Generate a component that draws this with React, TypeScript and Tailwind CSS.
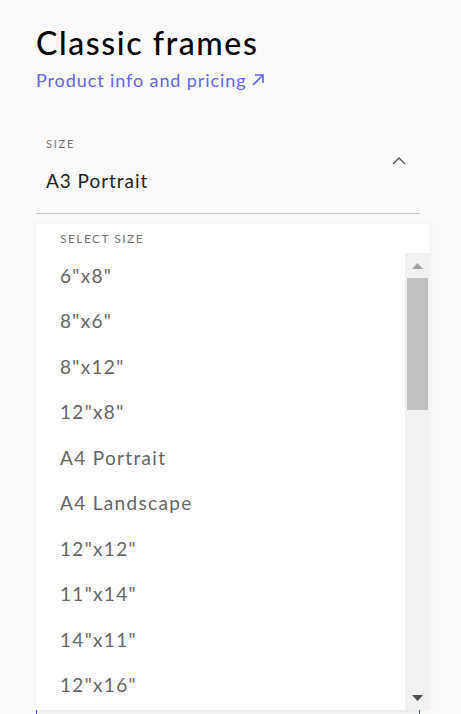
import React from 'react';

const sizes = ['6"x8"', '8"x6"', '8"x12"', '12"x8"', 'A4 Portrait', 'A4 Landscape', '12"x12"', '11"x14"', '14"x11"', '12"x16"'];

export default function App() {
  return (
    <main className="h-[714px] overflow-hidden bg-[#fbfbfb] px-[36px] pt-[23px] font-['Lato',sans-serif]">
      <h1 className="text-[32px] leading-[40px] font-medium tracking-[0.05em] text-black">Classic frames</h1>
      <a className="mt-[5px] flex items-center gap-[4px] text-[18px] leading-[24px] tracking-[0.05em] text-[#6366f1]" href="#">
        Product info and pricing
        <svg width="16" height="16" viewBox="0 0 16 16" fill="none" stroke="currentColor" strokeWidth="1.6">
          <path d="M3 13L13 3M5 3h8v8" />
        </svg>
      </a>

      <div className="mt-[37px] w-[384px]">
        <div className="relative border-b border-[#c8c8c8] px-[10px] pb-[20px] pt-[8px]">
          <div className="text-[11px] leading-[14px] tracking-[0.16em] text-[#777]">SIZE</div>
          <div className="mt-[18px] text-[19px] leading-[24px] tracking-[0.05em] text-[#222]">A3 Portrait</div>
          <svg className="absolute right-[14px] top-[27px]" width="14" height="9" viewBox="0 0 14 9" fill="none" stroke="#555" strokeWidth="1.3">
            <path d="M1 8l6-6 6 6" />
          </svg>

          <div className="absolute left-0 top-[calc(100%+11px)] z-10 w-[394px] bg-white shadow-[0_0_6px_rgba(0,0,0,0.05)]">
            <div className="flex h-[29px] items-center pl-[24px] text-[12px] tracking-[0.12em] text-[#777]">SELECT SIZE</div>
            <div className="flex h-[457px]">
              <ul className="flex-1 overflow-hidden">
                {sizes.map((s) => (
                  <li key={s} className="flex h-[45.5px] items-center pl-[24px] text-[19px] tracking-[0.07em] text-[#666]">
                    {s}
                  </li>
                ))}
              </ul>
              <div className="flex w-[25px] flex-col items-center bg-[#f1f1f1]">
                <div className="flex h-[25px] items-center justify-center">
                  <svg width="11" height="6" viewBox="0 0 11 6"><path d="M5.5 0L11 6H0z" fill="#a3a3a3" /></svg>
                </div>
                <div className="h-[132px] w-[21px] bg-[#c1c1c1]" />
                <div className="flex-1" />
                <div className="flex h-[25px] items-center justify-center">
                  <svg width="11" height="6" viewBox="0 0 11 6"><path d="M0 0h11L5.5 6z" fill="#505050" /></svg>
                </div>
              </div>
            </div>
          </div>
        </div>

        <div className="mt-[10px] h-[500px] border-x border-[#4f46e5] bg-[#f2f2f2]" />
      </div>
    </main>
  );
}
